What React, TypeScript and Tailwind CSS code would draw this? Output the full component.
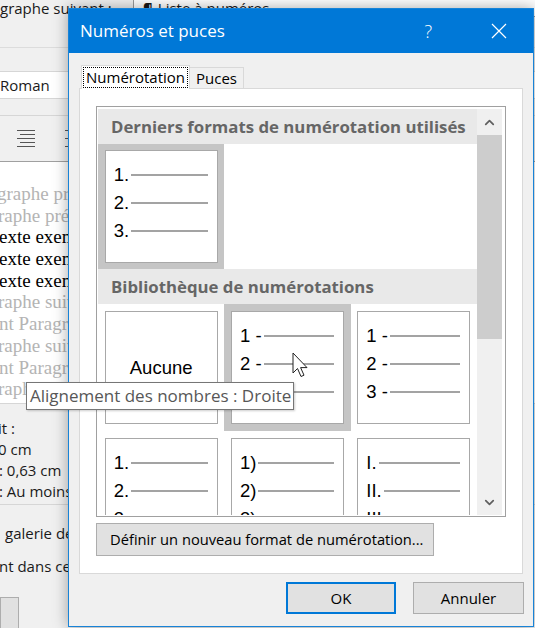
import { ChevronDown, ChevronUp } from 'lucide-react'

type Slot = { marks?: string[]; label?: string; hover?: boolean }

const recent: Slot[] = [{ marks: ['1.', '2.', '3.'], hover: true }, {}, {}]

const library: Slot[] = [
  { label: 'Aucune' },
  { marks: ['1 -', '2 -', '3 -'], hover: true },
  { marks: ['1 -', '2 -', '3 -'] },
  { marks: ['1.', '2.', '3.'] },
  { marks: ['1)', '2)', '3)'] },
  { marks: ['I.', 'II.', 'III.'] },
]

function ListCell({ slot, tall }: { slot: Slot; tall?: boolean }) {
  const empty = !slot.marks && !slot.label
  return (
    <div
      className={`flex items-center justify-center ${tall ? 'h-[127px]' : 'h-[125px]'} ${
        slot.hover ? 'bg-[#c5c5c5]' : ''
      }`}
    >
      {!empty && (
        <div className="h-[113px] w-[113px] overflow-hidden border border-[#a8a8a8] bg-white">
          {slot.label ? (
            <div className="flex h-full items-center justify-center font-['Liberation_Sans',sans-serif] text-[18.5px] text-black">
              {slot.label}
            </div>
          ) : (
            <div className="pl-[8px] pr-[9px] pt-[10px]">
              {slot.marks!.map(m => (
                <div key={m} className="flex h-[28px] items-center">
                  <span className="font-['Liberation_Sans',sans-serif] text-[18.5px] leading-none text-black">
                    {m}
                  </span>
                  <div className="ml-[2px] h-[2px] flex-1 bg-[#a3a3a3]" />
                </div>
              ))}
            </div>
          )}
        </div>
      )}
    </div>
  )
}

function GroupHeader({ children }: { children: string }) {
  return (
    <div className="flex h-[35px] items-center bg-[#e9e9e9] pl-[13px] text-[16.8px] font-bold whitespace-nowrap text-[#666666]">
      {children}
    </div>
  )
}

function Background() {
  // [text, dark, left offset]
  const preview: [string, boolean, string][] = [
    ['graphe précédent', false, '-ml-[3px]'],
    ['raphe précédent', false, '-ml-[2px]'],
    ['exte exemple', true, '-ml-[1px]'],
    ['exte exemple', true, '-ml-[1px]'],
    ['exte exemple', true, '-ml-[1px]'],
    ['raphe suivant', false, '-ml-[2px]'],
    ['nt Paragraphe', false, '-ml-[1px]'],
    ['raphe suivant', false, '-ml-[2px]'],
    ['nt Paragraphe', false, '-ml-[1px]'],
    ['raphe suivant', false, '-ml-[2px]'],
  ]
  return (
    <div className="flex w-[535px] flex-col text-[15px] text-[#1a1a1a]">
      {/* style row */}
      <div className="flex h-[48px] border-b border-[#dcdcdc]">
        <div className="w-[133px] leading-[17px]">graphe suivant :</div>
        <div className="flex h-[17px] flex-1 items-center gap-[5px] border-b border-l border-[#9a9a9a] bg-white pl-[9px] leading-none">
          <span className="font-bold">¶</span>
          <span>Liste à numéros</span>
        </div>
      </div>
      {/* font name */}
      <div className="mt-[23px] flex h-[28px] items-center border-y border-[#d6d6d6] bg-white">Roman</div>
      <div className="mt-[16px] flex h-[46px] items-center gap-[30px] border-t border-[#d6d6d6] pl-[17px]">
        {[0, 1].map(i => (
          <div key={i} className="flex w-[18px] flex-col items-end gap-[3px]">
            <div className="h-px w-[18px] bg-[#555]" />
            <div className="h-px w-[15px] bg-[#555]" />
            <div className="h-px w-[18px] bg-[#555]" />
            <div className="h-px w-[15px] bg-[#555]" />
            <div className="h-px w-[18px] bg-[#555]" />
          </div>
        ))}
      </div>
      {/* preview */}
      <div className="flex h-[242px] flex-col overflow-hidden border-t border-[#a0a0a0] bg-white pt-[21px] font-['Liberation_Serif',serif] text-[19px]">
        {preview.map(([t, dark, ml], i) => (
          <div key={i} className={`${ml} h-[21.7px] leading-[21.7px] whitespace-nowrap ${dark ? 'text-black' : 'text-[#b4b4b4]'}`}>
            {t}
          </div>
        ))}
      </div>
      <div className="flex h-[102px] flex-col border-y border-[#d6d6d6] pt-[14px] leading-[21px]">
        <div className="-ml-[2px]">it :</div>
        <div className="-ml-[2px]">0 cm</div>
        <div className="-ml-[1px]">: 0,63 cm</div>
        <div className="-ml-[1px]">: Au moins</div>
      </div>
      <div className="mt-[17px] pl-[5px]">galerie des styles</div>
      <div className="mt-[10px] -ml-[1px]">nt dans ce document</div>
      <div className="mt-[20px] h-[40px] w-[19px] border border-[#adadad] bg-[#e1e1e1]" />
    </div>
  )
}

export default function App() {
  return (
    <div className="relative h-[628px] w-[535px] overflow-hidden bg-[#f0f0f0] font-['Open_Sans',sans-serif]">
      <Background />

      {/* Numéros et puces dialog */}
      <div className="absolute left-[68px] top-[8px] flex h-[619px] w-[466px] flex-col border border-[#1883d7] bg-[#f0f0f0] shadow-[0_0_14px_rgba(0,0,0,0.35)]">
        <div className="flex h-[44px] items-center bg-[#0078d7] pl-[11px] text-white">
          <span className="text-[17px]">Numéros et puces</span>
          <span className="ml-auto mr-[59px] text-[18px] font-light">?</span>
          <svg width="16" height="16" viewBox="0 0 16 16" className="mr-[26px]">
            <path d="M1 1L15 15M15 1L1 15" stroke="white" strokeWidth="1.2" />
          </svg>
        </div>

        <div className="flex flex-col px-[10px] pt-[12px]">
          {/* tabs */}
          <div className="relative z-10 flex items-end pl-[2px] text-[15px] text-black">
            <div className="-mb-px h-[24px] border border-b-0 border-[#d9d9d9] bg-white px-[1px] pt-[1px]">
              <div className="border border-dotted border-black px-[2px] leading-[19px]">Numérotation</div>
            </div>
            <div className="h-[21px] border border-b-0 border-l-0 border-[#d9d9d9] bg-[#f0f0f0] px-[6px] leading-[21px]">
              Puces
            </div>
          </div>

          {/* tab panel */}
          <div className="flex h-[486px] flex-col border border-[#d9d9d9] bg-white pl-[16px] pt-[17px]">
            <div className="flex h-[411px] w-[410px] border border-[#a0a0a0] px-[1px] py-[1px] pt-[2px]">
              <div className="h-[406px] w-[379px] overflow-hidden">
                <GroupHeader>Derniers formats de numérotation utilisés</GroupHeader>
                <div className="grid grid-cols-3">
                  {recent.map((s, i) => (
                    <ListCell key={i} slot={s} />
                  ))}
                </div>
                <GroupHeader>Bibliothèque de numérotations</GroupHeader>
                <div className="grid grid-cols-3">
                  {library.map((s, i) => (
                    <ListCell key={i} slot={s} tall />
                  ))}
                </div>
              </div>
              <div className="flex w-[25px] flex-col bg-[#f0f0f0]">
                <div className="flex h-[26px] items-center justify-center">
                  <ChevronUp size={15} strokeWidth={2.75} className="text-[#606060]" />
                </div>
                <div className="h-[204px] bg-[#cdcdcd]" />
                <div className="mt-auto flex h-[26px] items-center justify-center">
                  <ChevronDown size={15} strokeWidth={2.75} className="text-[#606060]" />
                </div>
              </div>
            </div>
            <button className="mt-[6px] h-[33px] w-[338px] border border-[#adadad] bg-[#e1e1e1] pl-[13px] text-left text-[14.7px] whitespace-nowrap text-black">
              Définir un nouveau format de numérotation...
            </button>
          </div>

          {/* dialog buttons */}
          <div className="mt-[8px] flex justify-end gap-[17px]">
            <button className="h-[32px] w-[110px] border-2 border-[#0078d7] bg-[#e1e1e1] text-[15px] text-black">OK</button>
            <button className="-mr-[1px] h-[32px] w-[111px] border border-[#adadad] bg-[#e1e1e1] text-[15px] text-black">
              Annuler
            </button>
          </div>
        </div>
      </div>

      {/* tooltip */}
      <div className="absolute left-[26px] top-[382px] flex h-[28px] w-[268px] items-center border border-[#767676] bg-white pl-[3px] text-[17px] whitespace-nowrap text-[#575757] shadow-[1px_1px_2px_rgba(0,0,0,0.2)]">
        Alignement des nombres : Droite
      </div>

      {/* mouse pointer */}
      <svg width="18" height="27" viewBox="0 0 18 27" className="absolute left-[292px] top-[352px]">
        <path
          d="M1 1 L1 21 L5.5 16.5 L9 24.5 L12 23.2 L8.6 15.6 L15 15.6 Z"
          fill="white"
          stroke="#222"
          strokeWidth="1"
          strokeLinejoin="round"
        />
      </svg>
    </div>
  )
}
